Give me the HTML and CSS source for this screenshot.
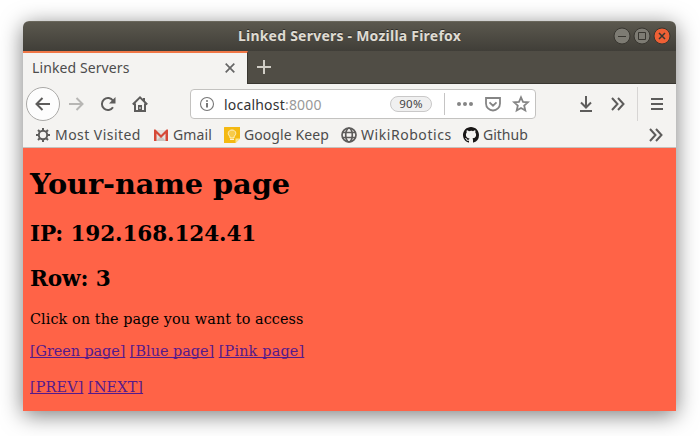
FILE: index.html
```
<!DOCTYPE html>
<html lang="en">
<head>
<meta charset="utf-8">
<title>Linked Servers</title>
<link rel="stylesheet" href="styles.css">
</head>
<body>
<div class="window">
  <header class="titlebar">
    <span class="window-title">Linked Servers - Mozilla Firefox</span>
    <div class="window-controls">
      <svg class="control" viewBox="0 0 18 18"><circle cx="9" cy="9" r="8" /><path d="M5 9.5h8"/></svg>
      <svg class="control" viewBox="0 0 18 18"><circle cx="9" cy="9" r="8" /><path d="M5.5 5.5h7v7h-7z"/></svg>
      <svg class="control close" viewBox="0 0 18 18"><circle cx="9" cy="9" r="8" /><path d="M6 6l6 6M12 6l-6 6"/></svg>
    </div>
  </header>
  <div class="tabs">
    <div class="tab">
      <span class="tab-label">Linked Servers</span>
      <svg class="tab-close" viewBox="0 0 10 10"><path d="M.7.7l8.6 8.6M9.3.7L.7 9.3"/></svg>
    </div>
    <svg class="new-tab" viewBox="0 0 14 14"><path d="M7 0v14M0 7h14"/></svg>
  </div>
  <nav class="toolbar">
    <div class="back"><svg class="icon" viewBox="0 0 16 16"><path d="M15 8H2M7.5 2L1.5 8l6 6"/></svg></div>
    <svg class="icon forward" viewBox="0 0 16 16"><path d="M1 8h13M8.500 2l6 6-6 6"/></svg>
    <svg class="icon reload" viewBox="0 0 16 16"><path d="M13 11.200A6 6 0 1 1 13 4.800"/><path class="solid" d="M15.500 1v6.500H9z"/></svg>
    <svg class="icon home" viewBox="0 0 16 16"><path d="M.8 8.500L8 1.300l7.200 7.200M3 7.500V15h10V7.500"/><path class="solid" d="M6 15V9h4v6zM11 2h2v4l-2-2z"/><path class="knob" d="M8 11v2"/></svg>
    <div class="urlbar">
      <svg class="info" viewBox="0 0 16 16"><circle cx="8" cy="8" r="6.500"/><path d="M8 7v4.500M8 4.300v1.500"/></svg>
      <span class="url">localhost<span class="port">:8000</span></span>
      <span class="zoom">90%</span>
      <i class="divider"></i>
      <svg class="url-icon dots" viewBox="0 0 16 16"><circle cx="2" cy="8" r="2"/><circle cx="8" cy="8" r="2"/><circle cx="14" cy="8" r="2"/></svg>
      <svg class="url-icon pocket" viewBox="0 0 16 16"><path d="M1 2h14v5.500a7 7 0 0 1-14 0zM4.500 6.300L8 9.700l3.500-3.400"/></svg>
      <svg class="url-icon" viewBox="0 0 16 16"><path d="M8 1.300l2 4.500 4.900.5-3.700 3.300 1.100 4.900L8 12l-4.300 2.500 1.100-4.900L1.100 6.300 6 5.800z"/></svg>
    </div>
    <svg class="icon download" viewBox="0 0 16 16"><path d="M8 0v11M3 6.500l5 5 5-5M2 15h12"/></svg>
    <svg class="icon more" viewBox="0 0 16 16"><path d="M2 2l5.500 6L2 14M8 2l5.500 6L8 14"/></svg>
    <i class="toolbar-line"></i>
    <svg class="icon menu" viewBox="0 0 16 16"><path d="M2 3h12M2 8h12M2 13h12"/></svg>
  </nav>
  <div class="bookmarks">
    <a class="bookmark visited"><svg class="icon gear" viewBox="0 0 16 16"><circle cx="8" cy="8" r="4.200"/><path d="M8 1v2.500M8 12.500V15M1 8h2.500M12.500 8H15M3 3l2 2M11 11l2 2M3 13l2-2M11 5l2-2"/></svg><span>Most Visited</span></a>
    <a class="bookmark gmail"><svg class="favicon" viewBox="0 0 16 16"><path fill="#e4e1dd" d="M1 3h14v11H1z"/><path fill="#c9c5c1" d="M3 14h10L8 9z"/><path fill="#d64937" d="M1 14V2.500h1.500L8 8l5.500-5.500H15V14h-2.500V6.500L8 11 3.500 6.500V14z"/></svg><span>Gmail</span></a>
    <a class="bookmark keep"><svg class="favicon" viewBox="0 0 16 16"><path fill="#f4b912" d="M.5 0H16v11.500L11.500 16H.5A.5.5 0 0 1 0 15.500V.5A.5.5 0 0 1 .5 0z"/><path fill="#ffe58a" d="M11.500 16v-4.500H16z"/><path fill="#f7cb4a" stroke="#fff3cb" d="M6 9.500C3 7.500 4 3 8 3s5 4.500 2 6.500V11H6zM6 12.500h4"/></svg><span>Google Keep</span></a>
    <a class="bookmark wiki"><svg class="icon" viewBox="0 0 16 16"><circle cx="8" cy="8" r="7"/><ellipse cx="8" cy="8" rx="3.300" ry="7"/><path d="M1.500 5.500h13M1.500 10.500h13"/></svg><span>WikiRobotics</span></a>
    <a class="bookmark github"><svg class="favicon" viewBox="0 0 16 16"><path fill="#181616" d="M8 0C3.580 0 0 3.580 0 8c0 3.540 2.290 6.530 5.470 7.590.4.070.55-.17.55-.38 0-.19-.01-.82-.01-1.490-2.010.37-2.530-.49-2.690-.94-.09-.23-.48-.94-.82-1.130-.28-.15-.68-.52-.01-.53.63-.01 1.080.58 1.230.82.72 1.210 1.870.87 2.330.66.070-.52.280-.87.510-1.070-1.780-.2-3.640-.89-3.640-3.950 0-.87.31-1.590.82-2.150-.08-.2-.36-1.020.08-2.120 0 0 .67-.21 2.200.82A7.600 7.600 0 0 1 8 3.860c.68 0 1.360.09 2 .27 1.530-1.040 2.200-.82 2.200-.82.44 1.100.16 1.920.08 2.120.51.56.82 1.270.82 2.150 0 3.070-1.870 3.750-3.650 3.950.29.25.54.73.54 1.480 0 1.070-.01 1.930-.01 2.200 0 .21.15.46.55.38A8 8 0 0 0 16 8c0-4.420-3.580-8-8-8z"/></svg><span>Github</span></a>
    <svg class="icon overflow" viewBox="0 0 16 16"><path d="M2 2l5.500 6L2 14M8 2l5.500 6L8 14"/></svg>
  </div>
  <main class="page">
    <h1>Your-name page</h1>
    <h2>IP: 192.168.124.41</h2>
    <h2>Row: 3</h2>
    <p class="prompt">Click on the page you want to access</p>
    <p class="links"><a class="green" href="#">[Green page]</a> <a href="#">[Blue page]</a> <a class="pink" href="#">[Pink page]</a></p>
    <p class="links pager"><a href="#">[PREV]</a> <a href="#">[NEXT]</a></p>
  </main>
</div>
</body>
</html>
```
FILE: styles.css
```
* { box-sizing: border-box; }
body {
  margin: 0;
  height: 436px;
  padding: 21px 24px 0 23px;
  overflow: hidden;
  background: #fff;
  font-family: "Noto Sans", "Open Sans", sans-serif;
}
svg { display: block; flex: none; overflow: visible; fill: none; }
span { white-space: nowrap; }
.window {
  height: 390px;
  border-radius: 6px 6px 0 0;
  box-shadow: 0 4px 22px rgba(0, 0, 0, .52);
  overflow: hidden;
}

.titlebar {
  display: grid;
  grid-template-columns: 80px 1fr 80px;
  align-items: center;
  height: 30px;
  background: linear-gradient(#5b584e, #403e38);
  border-top: 1px solid #6a675c;
}
.window-title {
  grid-column: 2;
  text-align: center;
  color: #dfdbd2;
  font-size: 14px;
  font-weight: 700;
  letter-spacing: .23px;
  line-height: 26px;
  padding-bottom: 2px;
  text-shadow: 0 -1px #302e2a;
}
.window-controls { display: flex; justify-content: flex-end; gap: 2px; padding: 0 5px 2px 0; }
.control { width: 18px; height: 18px; fill: #7d7b73; stroke: #383630; }
.control path { fill: none; }
.close { fill: #ee6035; }
.close path { stroke-width: 1.5; }

.tabs { display: flex; height: 33px; background: #504d45; border-bottom: 1px solid #393731; }
.tab {
  display: flex;
  align-items: center;
  width: 225px;
  height: 33px;
  padding: 0 12px 2px 9px;
  justify-content: space-between;
  background: #f4f3f1;
  border-top: 2px solid #f07746;
  border-right: 1px solid #393731;
}
.tab-label { color: #4c4c4c; font-size: 14px; line-height: 28px; letter-spacing: .1px; }
.tab-close { width: 10px; height: 10px; stroke: #666; stroke-width: 1.7; }
.new-tab { width: 14px; height: 14px; margin: 9px 0 0 9px; stroke: #d0cdc5; stroke-width: 2; }

.toolbar { display: flex; align-items: center; height: 40px; padding-left: 3px; background: #f4f3f1; }
.icon { width: 16px; height: 16px; stroke: #5d5c5b; stroke-width: 2; }
.back {
  display: grid;
  place-items: center;
  width: 34px;
  height: 34px;
  border: 1px solid #aaa9a7;
  border-radius: 50%;
  background: #fdfdfd;
}
.forward { margin-left: 8px; stroke: #b7b6b4; }
.reload { margin-left: 16px; }
.home { margin-left: 16px; }
.solid { fill: #5d5c5b; stroke: none; }
.knob { stroke: #f4f3f1; stroke-width: 1; }
.urlbar {
  display: flex;
  align-items: center;
  width: 346px;
  height: 30px;
  margin-left: 42px;
  padding-left: 8px;
  border: 1px solid #c3c2c0;
  border-radius: 4px;
  background: #fff;
}
.info { width: 16px; height: 16px; stroke: #777; stroke-width: 1.1; }
.info path { stroke-width: 2; }
.url { width: 166px; flex: none; margin-left: 9px; padding-top: 2px; color: #333; font-size: 14px; line-height: 26px; letter-spacing: .2px; }
.port { color: #999; }
.zoom {
  flex: none;
  width: 42px;
  height: 16px;
  border: 1px solid #c9c8c8;
  border-radius: 8px;
  background: #f0f0f0;
  color: #444;
  font-size: 11.5px;
  line-height: 14px;
  letter-spacing: .3px;
  text-align: center;
}
.divider { flex: none; width: 1px; height: 22px; margin: 0 12px; background: #c5c4c4; }
.url-icon { width: 16px; height: 16px; margin-right: 12px; stroke: #858585; stroke-width: 1.8; }
.dots { fill: #858585; stroke: none; }
.download { margin-left: 42px; }
.more { margin-left: 16px; }
.toolbar-line { width: 1px; height: 34px; margin: 0 11px; background: #d7d5d4; }

.bookmarks {
  display: flex;
  align-items: center;
  height: 24px;
  padding: 0 0 1px 12px;
  background: #f4f3f1;
  border-bottom: 1px solid #c5c2be;
}
.bookmark { display: flex; align-items: center; gap: 4px; color: #4c4c4c; font-size: 14px; line-height: 22px; }
.bookmark .icon { stroke-width: 1.7; }
.bookmark .gear { stroke-width: 2; }
.favicon { width: 16px; height: 16px; }
.visited { width: 118px; letter-spacing: .45px; }
.gmail { width: 71px; letter-spacing: .1px; }
.keep { width: 117px; letter-spacing: .08px; }
.wiki { width: 122px; letter-spacing: .55px; }
.overflow { margin-left: auto; margin-right: 12px; }

.page {
  display: flow-root;
  height: 263px;
  padding: 0 7px;
  background: #ff6347;
  color: #000;
  font-family: "DejaVu Serif", serif;
  font-size: 14.4px;
}
h1 { margin: 19px 0 0; font-size: 28.8px; line-height: 34px; letter-spacing: -.07px; }
h2 { margin: 19px 0 0; font-size: 21.6px; line-height: 26px; letter-spacing: -.15px; }
h1 + h2 { margin-top: 20px; }
.prompt { margin: 19px 0 0; line-height: 17px; letter-spacing: .085px; }
.links { margin: 15px 0 0; line-height: 17px; }
.pager { margin-top: 19px; letter-spacing: .13px; }
.links a { color: #551a8b; text-decoration-skip-ink: none; }
.green { letter-spacing: -.06px; }
.pink { letter-spacing: .18px; }
```
